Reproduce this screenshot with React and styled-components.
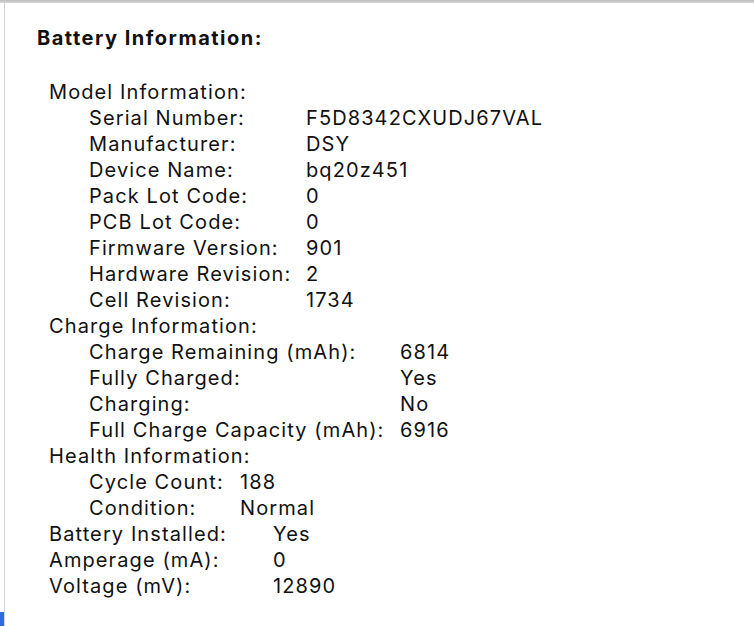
import React from 'react';
import styled, { createGlobalStyle } from 'styled-components';

const GlobalStyle = createGlobalStyle`
  html, body {
    margin: 0;
    padding: 0;
    background: #ffffff;
  }
  body {
    font-family: Inter, "Liberation Sans", sans-serif;
    color: #111;
  }
`;

const sections = [
  {
    title: 'Model Information:',
    labelWidth: 217,
    rows: [
      ['Serial Number:', 'F5D8342CXUDJ67VAL'],
      ['Manufacturer:', 'DSY'],
      ['Device Name:', 'bq20z451'],
      ['Pack Lot Code:', '0'],
      ['PCB Lot Code:', '0'],
      ['Firmware Version:', '901'],
      ['Hardware Revision:', '2'],
      ['Cell Revision:', '1734'],
    ],
  },
  {
    title: 'Charge Information:',
    labelWidth: 311,
    rows: [
      ['Charge Remaining (mAh):', '6814'],
      ['Fully Charged:', 'Yes'],
      ['Charging:', 'No'],
      ['Full Charge Capacity (mAh):', '6916'],
    ],
  },
  {
    title: 'Health Information:',
    labelWidth: 151,
    rows: [
      ['Cycle Count:', '188'],
      ['Condition:', 'Normal'],
    ],
  },
];

const topRows = [
  ['Battery Installed:', 'Yes'],
  ['Amperage (mA):', '0'],
  ['Voltage (mV):', '12890'],
];

const App = () => {
  return (
    <>
      <GlobalStyle />
      <Window>
        <TopEdge />
        <Pane>
          <Title>Battery Information:</Title>
          <Tree>
            {sections.map((s) => (
              <Group key={s.title}>
                <GroupTitle>{s.title}</GroupTitle>
                <Nested>
                  {s.rows.map(([label, value]) => (
                    <Row key={label} labelWidth={s.labelWidth}>
                      <Label>{label}</Label>
                      <Value>{value}</Value>
                    </Row>
                  ))}
                </Nested>
              </Group>
            ))}
            {topRows.map(([label, value]) => (
              <Row key={label} labelWidth={224}>
                <Label>{label}</Label>
                <Value>{value}</Value>
              </Row>
            ))}
          </Tree>
        </Pane>
        <FocusMark />
      </Window>
    </>
  );
};

const Window = styled.div`
  position: relative;
  width: 754px;
  height: 626px;
  overflow: hidden;
  display: flex;
  flex-direction: column;
  background: #fff;
`;

const TopEdge = styled.div`
  height: 3px;
  flex-shrink: 0;
  background: linear-gradient(#bdbdbd, #d6d6d6);
`;

const Pane = styled.div`
  flex: 1;
  margin-left: 4px;
  border-left: 1px solid #d4d4d4;
  padding: 14px 0 0 32px;
`;

const Title = styled.h2`
  margin: 0;
  font-size: 20px;
  font-weight: 700;
  line-height: 42px;
  letter-spacing: 1.5px;
`;

const Tree = styled.div`
  margin-top: 20px;
  padding-left: 12px;
  font-size: 20px;
  line-height: 26px;
  letter-spacing: 1.1px;
`;

const Group = styled.div``;

const GroupTitle = styled.div``;

const Nested = styled.div`
  padding-left: 40px;
`;

const Row = styled.div`
  display: grid;
  grid-template-columns: ${(p) => p.labelWidth}px auto;
  white-space: nowrap;
`;

const Label = styled.span``;

const Value = styled.span``;

const FocusMark = styled.div`
  position: absolute;
  left: 0;
  bottom: 0;
  width: 4px;
  height: 14px;
  background: #2b6fde;
`;

export default App;
